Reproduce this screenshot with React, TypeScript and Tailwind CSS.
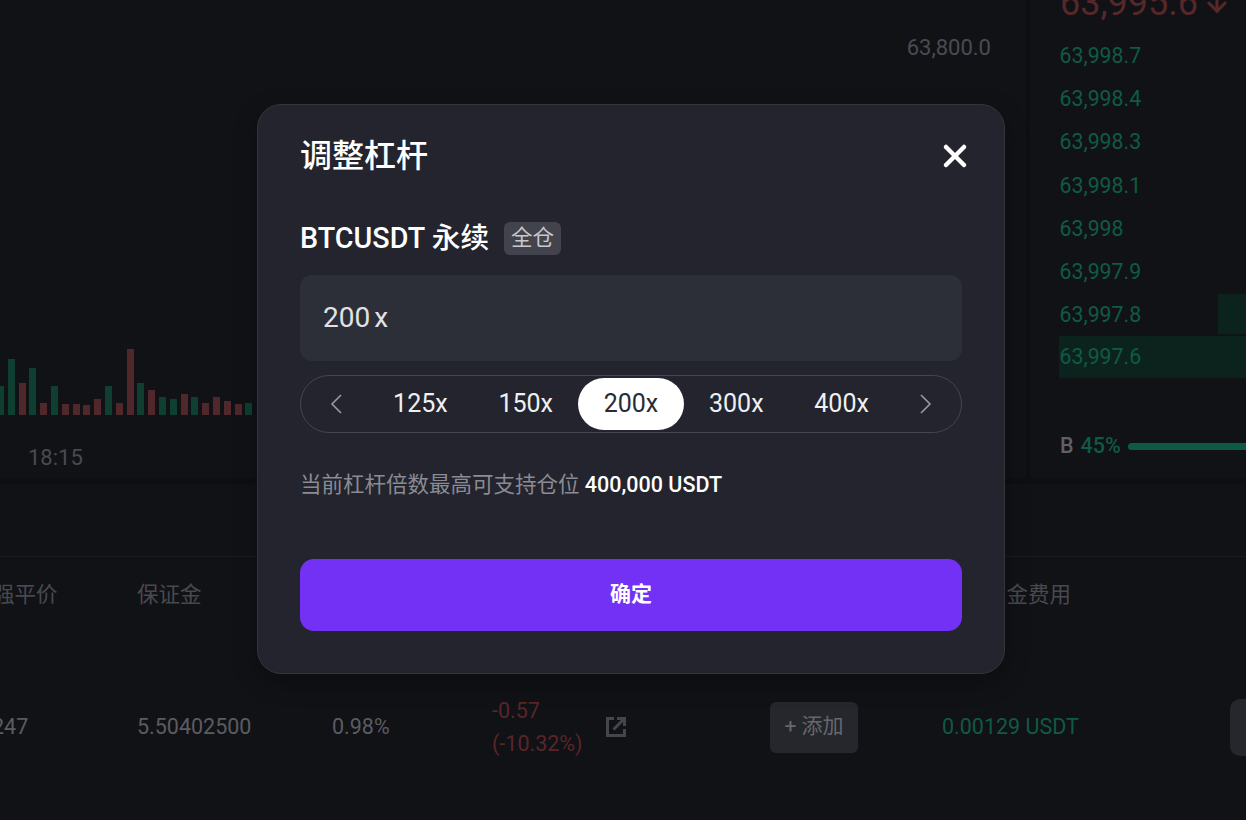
import { X, ArrowDown } from "lucide-react";

const FONT = "font-['Roboto','Noto_Sans_CJK_SC',sans-serif]";

// height in px, green or red
const volumes: [number, "g" | "r"][] = [
  [29, "g"], [56, "g"], [32, "r"], [47, "g"], [12, "r"], [29, "g"], [11, "r"], [11, "r"],
  [10, "r"], [16, "r"], [29, "g"], [12, "r"], [66, "r"], [32, "g"], [25, "r"], [18, "g"],
  [16, "g"], [21, "r"], [18, "g"], [12, "r"], [18, "r"], [14, "r"], [11, "r"], [12, "g"],
];

const asks = ["63,998.7", "63,998.4", "63,998.3", "63,998.1", "63,998", "63,997.9"];
const leverages = ["125x", "150x", "200x", "300x", "400x"];

const Chart = () => (
  <div className="relative w-[1030px] shrink-0 border-r-[4px] border-[#0e0f12]">
    <div className="flex justify-end pt-[36px] pr-[35px] text-[22px] leading-[24px] text-[#4a4b52]">
      63,800.0
    </div>
    {/* Volume bars */}
    <div className="ml-[-3px] mt-[289px] flex h-[66px] items-end gap-[3.8px]">
      {volumes.map(([h, c], i) => (
        <div
          key={i}
          className={c === "g" ? "w-[7px] bg-[#0e3f31]" : "w-[7px] bg-[#50272a]"}
          style={{ height: h }}
        />
      ))}
    </div>
    <div className="pl-[28px] pt-[29px] text-[22px] leading-[28px] text-[#494a51]">18:15</div>
  </div>
);

const OrderBook = () => (
  <div className="flex-1 pl-[30px]">
    <div className="mt-[-15px] flex h-[36px] items-center gap-[5px] text-[36px] leading-[36px] text-[#572729]">
      63,995.6
      <ArrowDown size={28} strokeWidth={2.6} />
    </div>
    <div className="mt-[13px] flex flex-col">
      {asks.map((p) => (
        <div key={p} className="ml-[-0.5px] h-[43.2px] text-[21.3px] leading-[43px] text-[#0f5a45]">
          {p}
        </div>
      ))}
      <div className="relative ml-[-0.5px] h-[43.2px] text-[21.3px] leading-[43px] text-[#0f5a45]">
        <div className="absolute right-0 top-[1px] h-[40px] w-[28px] bg-[#0c231d]" />
        <span className="relative">63,997.8</span>
      </div>
      <div className="ml-[-1px] h-[42px] bg-[#0c231d] pl-[0.5px] text-[21.3px] leading-[42px] text-[#0f5a45]">63,997.6</div>
    </div>
    <div className="mt-[56px] flex items-center text-[21.5px] font-medium leading-[24px]">
      <span className="text-[#5f6066]">B</span>
      <span className="ml-[7px] text-[#0f5a45]">45%</span>
      <div className="ml-[7px] h-[7px] flex-1 rounded-l-full bg-[#0f5a45]" />
    </div>
  </div>
);

const Positions = () => (
  <div className="flex-1 border-t-[6px] border-[#0e0f12] text-[21.5px]">
    <div className="h-[73px] border-b border-[#1a1b20]" />
    <div className="flex h-[74px] items-center pt-[3px] text-[#48494f]">
      <div className="ml-[-7px] w-[144px] shrink-0">强平价</div>
      <div className="w-[848px] shrink-0">保证金</div>
      <div className="shrink-0">资金费用</div>
    </div>
    <div className="mt-[28px] flex h-[136px] items-center text-[#5b5c62]">
      <div className="ml-[-8px] w-[145px] shrink-0">247</div>
      <div className="w-[195px] shrink-0">5.50402500</div>
      <div className="w-[160px] shrink-0">0.98%</div>
      <div className="w-[113px] shrink-0 leading-[33px] text-[#5a2528]">
        -0.57
        <br />
        (-10.32%)
      </div>
      <svg width="22" height="22" viewBox="0 0 22 22" fill="none" stroke="#45464d" strokeWidth="3" className="shrink-0">
        <path d="M9 2.5H2.5v17h17V13" />
        <path d="M8.5 13.5 19 3M12 2.5h7.5V10" />
      </svg>
      <div className="ml-[143px] flex h-[51px] w-[88px] shrink-0 items-center justify-center rounded-[6px] bg-[#26272c] text-[21px] text-[#66676d]">
        + 添加
      </div>
      <div className="ml-[84px] w-[288px] shrink-0 text-[#0f5a45]">0.00129 USDT</div>
      <div className="h-[57px] w-[40px] shrink-0 rounded-l-[10px] bg-[#26272c]" />
    </div>
  </div>
);

const LeverageModal = () => (
  <div className="absolute left-[257px] top-[104px] flex h-[570px] w-[748px] flex-col rounded-[24px] border border-[#33343c] bg-[#23242d] px-[42px] pt-[30px] shadow-[0_8px_24px_rgba(0,0,0,0.3)]">
    <div className="flex items-center justify-between">
      <div className="text-[32px] font-medium leading-[42px] text-white">调整杠杆</div>
      <X size={36} strokeWidth={3} className="mr-[-11px] text-white" />
    </div>
    <div className="mt-[43px] flex items-center">
      <span className="text-[28.7px] font-medium leading-[36px] text-white">BTCUSDT 永续</span>
      <span className="ml-[15px] flex h-[33px] w-[57px] items-center justify-center rounded-[6px] bg-[#42434c] text-[21.5px] text-[#c8c8cd]">
        全仓
      </span>
    </div>
    <div className="mt-[19px] flex h-[86px] items-center rounded-[12px] bg-[#2d2f38] px-[23px] text-[28px] text-[#e2e2e6]">
      200<span className="ml-[4px]">x</span>
    </div>
    <div className="mt-[14px] flex h-[58px] items-center rounded-full border border-[#44454d] px-[29px]">
      <svg width="12" height="20" viewBox="0 0 12 20" fill="none" stroke="#9a9aa1" strokeWidth="1.6" className="shrink-0">
        <path d="M11 1 2 10l9 9" />
      </svg>
      <div className="flex flex-1 items-center justify-center">
        {leverages.map((l) =>
          l === "200x" ? (
            <div
              key={l}
              className="flex h-[52px] w-[105.3px] items-center justify-center rounded-full bg-white text-[25px] text-[#2a2b35]"
            >
              {l}
            </div>
          ) : (
            <div key={l} className="flex h-[52px] w-[105.3px] items-center justify-center text-[25px] text-[#f0f0f2]">
              {l}
            </div>
          ),
        )}
      </div>
      <svg width="12" height="20" viewBox="0 0 12 20" fill="none" stroke="#9a9aa1" strokeWidth="1.6" className="shrink-0">
        <path d="m1 1 9 9-9 9" />
      </svg>
    </div>
    <div className="mt-[38px] text-[21.5px] leading-[28px] text-[#8a8b93]">
      当前杠杆倍数最高可支持仓位 <span className="font-medium text-white">400,000 USDT</span>
    </div>
    <button className="mt-[60px] h-[72px] rounded-[14px] bg-[#7331f5] text-[21px] font-bold text-white">确定</button>
  </div>
);

export default function App() {
  return (
    <div className={`${FONT} relative flex h-[820px] w-[1246px] flex-col overflow-hidden bg-[#111216]`}>
      <div className="flex h-[478px] shrink-0 overflow-hidden">
        <Chart />
        <OrderBook />
      </div>
      <Positions />
      <LeverageModal />
    </div>
  );
}
